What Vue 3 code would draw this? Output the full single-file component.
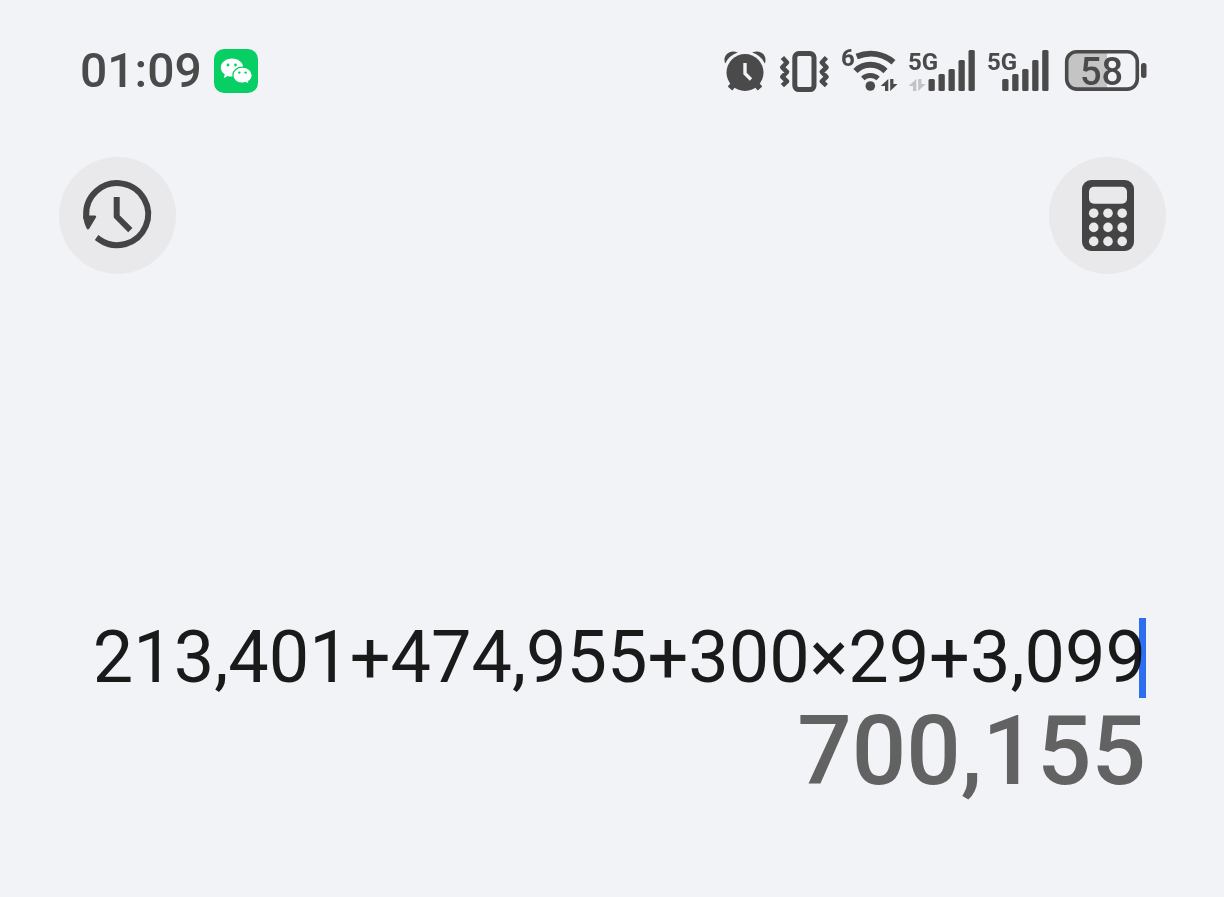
<script setup>
import { ref } from "vue";

const time = ref("01:09");
const battery = ref(58);
const expression = ref("213,401+474,955+300×29+3,099");
const result = ref("700,155");

// Signal bars, left to right: x is relative to the first bar
const bars = [
  { x: 0, y: 31 },
  { x: 10, y: 26 },
  { x: 20, y: 21 },
  { x: 30, y: 12 },
  { x: 40, y: 2 },
];

const keys = [];
for (const cy of [33.2, 47.4, 61.4]) {
  for (const cx of [11.7, 26, 40.2]) {
    keys.push({ cx, cy });
  }
}
</script>

<template>
  <div class="calculator">
    <header class="status-bar">
      <div class="status-left">
        <span class="time">{{ time }}</span>
        <svg width="44" height="44" viewBox="0 0 44 44" aria-hidden="true">
          <rect width="44" height="44" rx="10" fill="#07cf63" />
          <path
            d="M18 9.5c-6.3 0-11.2 4-11.2 9.100 0 2.900 1.500 5.300 4 7l-1 3.400 4-2c1.300.4 2.700.6 4.200.6 6.300 0 11.200-4 11.200-9s-4.900-9.100-11.200-9.100z"
            fill="#fff"
          />
          <path
            d="M28.500 18.200c-5.400 0-9.700 3.600-9.700 8s4.300 8 9.700 8c1.200 0 2.400-.2 3.500-.5l3.300 1.800-.8-3c2.200-1.500 3.700-3.700 3.700-6.300 0-4.400-4.300-8-9.700-8z"
            fill="#fff"
            stroke="#07cf63"
            stroke-width="1.2"
          />
          <circle cx="14" cy="16" r="1.4" fill="#07cf63" />
          <circle cx="21.5" cy="16" r="1.4" fill="#07cf63" />
          <circle cx="25.3" cy="23.6" r="1.2" fill="#07cf63" />
          <circle cx="31.6" cy="23.6" r="1.2" fill="#07cf63" />
        </svg>
      </div>

      <div class="status-right">
        <!-- alarm -->
        <svg width="43" height="46" viewBox="0 0 43 46" aria-hidden="true">
          <path d="M6 40.500l6-7M36 40.500l-6-7" class="line" stroke-width="6" />
          <circle cx="21" cy="24.5" r="18.5" class="solid" />
          <path
            d="M1.2 15.500C-2 8 5.500.5 13.800 4.600A21.500 21.500 0 0 0 1.200 15.500zM40.800 15.500C44 8 36.500.5 28.200 4.600A21.500 21.500 0 0 1 40.800 15.500z"
            class="solid"
          />
          <path d="M21 15v10.500l6 6" class="hands" />
        </svg>

        <!-- vibrate -->
        <svg width="50" height="46" viewBox="0 0 50 46" aria-hidden="true">
          <rect x="15.8" y="5.6" width="19.2" height="36" rx="4" class="line" stroke-width="5" />
          <path
            d="M3.400 9.500l4.600 5-4.700 4.800L8 24l-4.700 4.800L8 33.300l-4.600 4.300M47.400 9.500l-4.600 5 4.700 4.800-4.700 4.700 4.700 4.800-4.700 4.500 4.600 4.300"
            class="line"
            stroke-width="4.6"
          />
        </svg>

        <!-- wifi -->
        <svg width="55" height="46" viewBox="0 0 55 46" aria-hidden="true">
          <text x="0" y="18" class="wifi-text">6</text>
          <path d="M15.700 8.500C28.500 3.500 42 5.500 52.500 14.200" class="arc" stroke-width="6" />
          <path d="M14.500 23c8.200-8.200 21.400-8.200 30 0" class="arc" stroke-width="6" />
          <path d="M21.800 30.500c4.200-4 10.800-4 15.300 0" class="arc" stroke-width="5" />
          <circle cx="29.3" cy="38" r="4.8" class="solid" />
          <path d="M47.300 31v12h-3.300v-5h-4.300zM49.200 43V31h3.200v5h4.200z" class="solid" />
        </svg>

        <svg width="67" height="46" viewBox="0 0 67 46" aria-hidden="true">
          <text x="0" y="22" class="net-text">5G</text>
          <path d="M8.300 31v12H5v-5H.7zM10.200 43V31h3.200v5h4.200z" fill="#c2c2c4" />
          <rect
            v-for="bar in bars"
            :key="bar.x"
            :x="bar.x + 20.5"
            :y="bar.y"
            width="6.3"
            :height="43 - bar.y"
            rx="1.5"
            class="solid"
          />
        </svg>

        <svg width="62" height="46" viewBox="0 0 62 46" aria-hidden="true">
          <text x="0" y="22" class="net-text">5G</text>
          <rect
            v-for="bar in bars"
            :key="bar.x"
            :x="bar.x + 15.2"
            :y="bar.y"
            width="6.3"
            :height="43 - bar.y"
            rx="1.5"
            class="solid"
          />
        </svg>

        <!-- battery -->
        <svg width="86" height="46" viewBox="0 0 86 46" role="img" aria-label="Battery">
          <path d="M46 5H16a9 9 0 0 0-9 9v17a9 9 0 0 0 9 9h30z" fill="#c4c4c5" />
          <rect x="5.7" y="3.7" width="70.6" height="37.4" rx="10" class="line" stroke-width="3.6" />
          <rect x="80" y="15" width="5.5" height="15" rx="2.5" class="solid" />
          <text x="40.5" y="37" text-anchor="middle" class="battery-text">{{ battery }}</text>
        </svg>
      </div>
    </header>

    <nav class="toolbar">
      <button type="button" class="round-button" aria-label="History">
        <svg width="72" height="72" viewBox="0 0 72 72" aria-hidden="true">
          <path d="M17 59.300A31 31 0 1 0 4.200 36" class="tool-line" />
          <path d="M1.200 35.500h11.700c1.300 0 1.600 1 1 2L7.200 48.800c-.8 1.200-2 1-2.500-.2C2.700 44.500 1.500 40.500 1.200 35.500z" class="tool-solid" />
          <path d="M34.700 20v16.500l11.500 11.500" class="tool-line" />
        </svg>
      </button>
      <button type="button" class="round-button" aria-label="Calculator">
        <svg width="52" height="72" viewBox="0 0 52 72" aria-hidden="true">
          <rect width="52" height="71" rx="9" class="tool-solid" />
          <rect x="7" y="6.8" width="38" height="17" rx="5" fill="#e9e9eb" />
          <circle v-for="key in keys" :key="`${key.cx}-${key.cy}`" :cx="key.cx" :cy="key.cy" r="4.8" fill="#e9e9eb" />
        </svg>
      </button>
    </nav>

    <main class="display">
      <div class="expression">
        <input v-model="expression" type="text" aria-label="Expression" inputmode="none" />
        <span class="caret"></span>
      </div>
      <output class="result">{{ result }}</output>
    </main>
  </div>
</template>

<style>
body {
  margin: 0;
  background-color: #f2f3f7;
}
</style>

<style scoped>
.calculator {
  display: flex;
  flex-direction: column;
  box-sizing: border-box;
  min-height: 100vh;
  background-color: #f2f3f7;
  font-family: Roboto, "Liberation Sans", sans-serif;
}

.status-bar {
  display: flex;
  justify-content: space-between;
  align-items: center;
  padding: 48px 77px 0 80px;
}

.status-left,
.status-right {
  display: flex;
  align-items: center;
  gap: 12px;
}

svg {
  display: block;
  flex: none;
  overflow: visible;
}

.time {
  color: #4a4a4b;
  font-size: 48px;
  font-weight: 500;
  line-height: 46px;
}

.solid {
  fill: #4a4a4b;
}

.line {
  fill: none;
  stroke: #4a4a4b;
  stroke-linejoin: round;
}

.arc {
  fill: none;
  stroke: #4a4a4b;
}

.hands {
  fill: none;
  stroke: #f2f3f7;
  stroke-width: 3.4;
  stroke-linejoin: round;
}

.wifi-text,
.net-text {
  fill: #4a4a4b;
  font-size: 24px;
  font-weight: 700;
}

.battery-text {
  fill: #4a4a4b;
  font-size: 38px;
  font-weight: 500;
}

.toolbar {
  display: flex;
  justify-content: space-between;
  padding: 63px 58px 0 59px;
}

.round-button {
  display: flex;
  align-items: center;
  justify-content: center;
  width: 117px;
  height: 117px;
  padding: 0;
  border: none;
  border-radius: 50%;
  background-color: #e9e9eb;
  cursor: pointer;
}

.tool-solid {
  fill: #444445;
}

.tool-line {
  fill: none;
  stroke: #444445;
  stroke-width: 6;
  stroke-linecap: square;
  stroke-linejoin: round;
}

.display {
  display: flex;
  flex-direction: column;
  margin-top: auto;
  padding: 0 78px 93px 60px;
}

.expression {
  position: relative;
}

.expression input {
  display: block;
  box-sizing: border-box;
  width: 100%;
  height: 80px;
  padding: 0;
  border: none;
  outline: none;
  background: none;
  color: #1a1a1b;
  font-family: inherit;
  font-size: 72px;
  line-height: 80px;
  text-align: right;
  caret-color: transparent;
}

.caret {
  position: absolute;
  top: 0;
  right: 0;
  width: 7px;
  height: 80px;
  background-color: #2e74f8;
  mix-blend-mode: multiply;
}

.result {
  color: #626263;
  font-size: 96px;
  font-weight: 500;
  line-height: 106px;
  text-align: right;
}
</style>
